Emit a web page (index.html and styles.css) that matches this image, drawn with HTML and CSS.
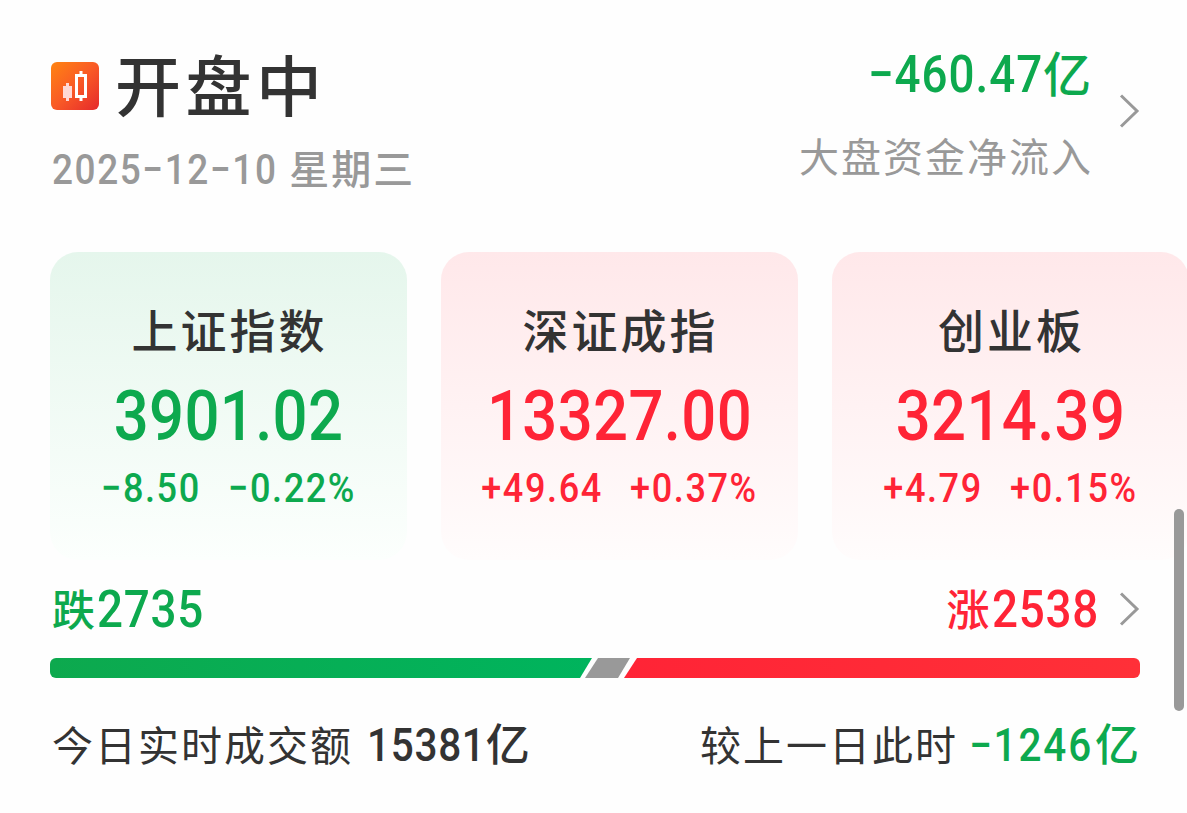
FILE: index.html
```html
<!DOCTYPE html>
<html lang="zh-CN">
<head>
    <meta charset="UTF-8">
    <title>开盘中</title>
    <link rel="stylesheet" href="styles.css">
</head>
<body>
    <div class="page">
        <div class="header">
            <div class="status">
                <div class="title-row">
                    <svg class="logo" width="48" height="48" viewBox="0 0 48 48">
                        <defs>
                            <linearGradient id="logo-bg" x1="0" y1="0" x2="1" y2="1">
                                <stop offset="0" stop-color="#ff8412"/>
                                <stop offset="0.5" stop-color="#f95a26"/>
                                <stop offset="1" stop-color="#e5292c"/>
                            </linearGradient>
                        </defs>
                        <rect width="48" height="48" rx="6" fill="url(#logo-bg)"/>
                        <path d="M12 24h9v12h-9zM15 21h3v18h-3z" fill="#ffd9d5"/>
                        <path d="M25.5 13.5h9v21h-9z" fill="none" stroke="#fff" stroke-width="3"/>
                        <path d="M28.5 9h3v4h-3zM28.5 35h3v4h-3z" fill="#fff"/>
                    </svg>
                    <h1>开盘中</h1>
                </div>
                <div class="date"><span class="num">2025−12−10</span> 星期三</div>
            </div>
            <div class="flow">
                <div class="flow-text">
                    <div class="flow-value green"><span class="num">−460.47</span>亿</div>
                    <div class="flow-label">大盘资金净流入</div>
                </div>
                <svg class="arrow" width="22" height="36" viewBox="0 0 22 36"><path d="M3 2.5L19 18 3 33.5"/></svg>
            </div>
        </div>

        <div class="cards">
            <div class="card down">
                <h2>上证指数</h2>
                <div class="price">3901.02</div>
                <div class="change"><span>−8.50</span><span>−0.22%</span></div>
            </div>
            <div class="card up">
                <h2>深证成指</h2>
                <div class="price">13327.00</div>
                <div class="change"><span>+49.64</span><span>+0.37%</span></div>
            </div>
            <div class="card up">
                <h2>创业板</h2>
                <div class="price">3214.39</div>
                <div class="change"><span>+4.79</span><span>+0.15%</span></div>
            </div>
        </div>

        <div class="counts">
            <div class="green">跌<span class="num">2735</span></div>
            <div class="rise red">
                <div>涨<span class="num">2538</span></div>
                <svg class="arrow" width="22" height="36" viewBox="0 0 22 36"><path d="M3 2.5L19 18 3 33.5"/></svg>
            </div>
        </div>

        <svg class="bar" width="1090" height="20" viewBox="0 0 1090 20">
            <defs>
                <linearGradient id="bar-down" x1="0" x2="1">
                    <stop offset="0" stop-color="#0da94e"/>
                    <stop offset="1" stop-color="#00b45d"/>
                </linearGradient>
                <linearGradient id="bar-up" x1="0" x2="1">
                    <stop offset="0" stop-color="#ff2436"/>
                    <stop offset="1" stop-color="#ff3038"/>
                </linearGradient>
            </defs>
            <path d="M6 0H542L530 20H6a6 6 0 0 1-6-6V6a6 6 0 0 1 6-6z" fill="url(#bar-down)"/>
            <path d="M548 0H580L568 20H535z" fill="#999"/>
            <path d="M587 0H1084a6 6 0 0 1 6 6V14a6 6 0 0 1-6 6H574z" fill="url(#bar-up)"/>
        </svg>

        <div class="turnover">
            <div>今日实时成交额<b class="total"><span class="num">15381</span>亿</b></div>
            <div>较上一日此时<b class="diff green"><span class="num">−1246</span>亿</b></div>
        </div>
    </div>
    <div class="scrollbar"></div>
</body>
</html>
```

FILE: styles.css
```css
body {
    margin: 0;
    background-color: #fefefe;
    color: #333;
    font-family: "Noto Sans CJK SC", sans-serif;
    overflow: hidden;
}
h1, h2 {
    margin: 0;
    font-weight: 500;
}
/* narrow figures */
.num, .price, .change {
    font-family: Roboto, sans-serif;
    font-weight: 500;
    transform: scaleX(0.88);
}
.num {
    display: inline-block;
    transform-origin: left;
}
.green {
    color: #0da94e;
}
.red {
    color: #ff2436;
}
.page {
    width: 1090px;
    height: 813px;
    padding-left: 50px;
}
.header {
    display: flex;
    justify-content: space-between;
    height: 252px;
}
.title-row {
    display: flex;
    gap: 16px;
    padding-top: 42px;
}
.logo {
    margin: 20px 0 0 1px;
}
h1 {
    font-size: 66px;
    line-height: 80px;
    letter-spacing: 4.5px;
}
.date {
    margin-top: 20px;
    padding-left: 2px;
    font-size: 40px;
    font-weight: 500;
    line-height: 50px;
    letter-spacing: 2px;
    color: #999;
    white-space: nowrap;
}
.date .num {
    margin-right: -30px;
    font-size: 42px;
    letter-spacing: 1.8px;
}
.flow {
    display: flex;
}
.flow-text {
    padding-top: 41px;
    text-align: right;
}
.flow-value {
    font-size: 48px;
    font-weight: 500;
    line-height: 60px;
}
.flow-value .num {
    font-size: 52px;
    letter-spacing: 1.1px;
    transform-origin: right;
}
.flow-label {
    margin-top: 20px;
    font-size: 40px;
    line-height: 60px;
    letter-spacing: 2px;
    margin-right: -2px;
    color: #999;
}
.flow .arrow {
    margin: 93px 0 0 27px;
}
.arrow path {
    fill: none;
    stroke: #999;
    stroke-width: 3;
}
.cards {
    display: flex;
    gap: 34px;
}
.card {
    flex: none;
    width: 357px;
    height: 308px;
    border-radius: 28px;
    text-align: center;
}
.down {
    background: linear-gradient(#e5f6ec, #fcfffd);
    color: #0da94e;
}
.up {
    background: linear-gradient(#ffe8ea, #fffcfc);
    color: #ff2436;
}
.card h2 {
    padding: 46px 0 0 2px;
    font-size: 46px;
    line-height: 60px;
    letter-spacing: 3px;
    color: #333;
}
.price {
    margin-top: 18px;
    font-size: 70px;
    line-height: 80px;
    letter-spacing: 0.4px;
}
.change {
    display: flex;
    justify-content: center;
    gap: 31px;
    margin-top: 7px;
    font-size: 41px;
    line-height: 50px;
    letter-spacing: 1.8px;
}
.counts {
    display: flex;
    justify-content: space-between;
    margin-top: 18px;
    padding-left: 2px;
    height: 62px;
    font-size: 43px;
    font-weight: 500;
    line-height: 58px;
}
.counts .num {
    margin: 0 -15px 0 2px;
    font-size: 52px;
    letter-spacing: 0.8px;
    vertical-align: -1px;
}
.rise {
    display: flex;
}
.rise .arrow {
    margin: 13px 0 0 20px;
}
.bar {
    display: block;
    margin-top: 18px;
}
.turnover {
    display: flex;
    justify-content: space-between;
    margin-top: 34px;
    padding: 0 1px 0 2px;
    font-size: 41px;
    line-height: 60px;
    letter-spacing: 2px;
}
.turnover b {
    margin-left: 14px;
    font-size: 44px;
    font-weight: 500;
    letter-spacing: 0;
}
.turnover .num {
    margin-right: -16px;
    font-size: 46px;
    letter-spacing: 0.8px;
}
.turnover .diff {
    margin-left: 11px;
}
.turnover .diff .num {
    margin-right: -15px;
    letter-spacing: 2.1px;
}
.scrollbar {
    position: absolute;
    top: 509px;
    left: 1174px;
    width: 10px;
    height: 202px;
    border-radius: 5px;
    background-color: #999;
}
```
